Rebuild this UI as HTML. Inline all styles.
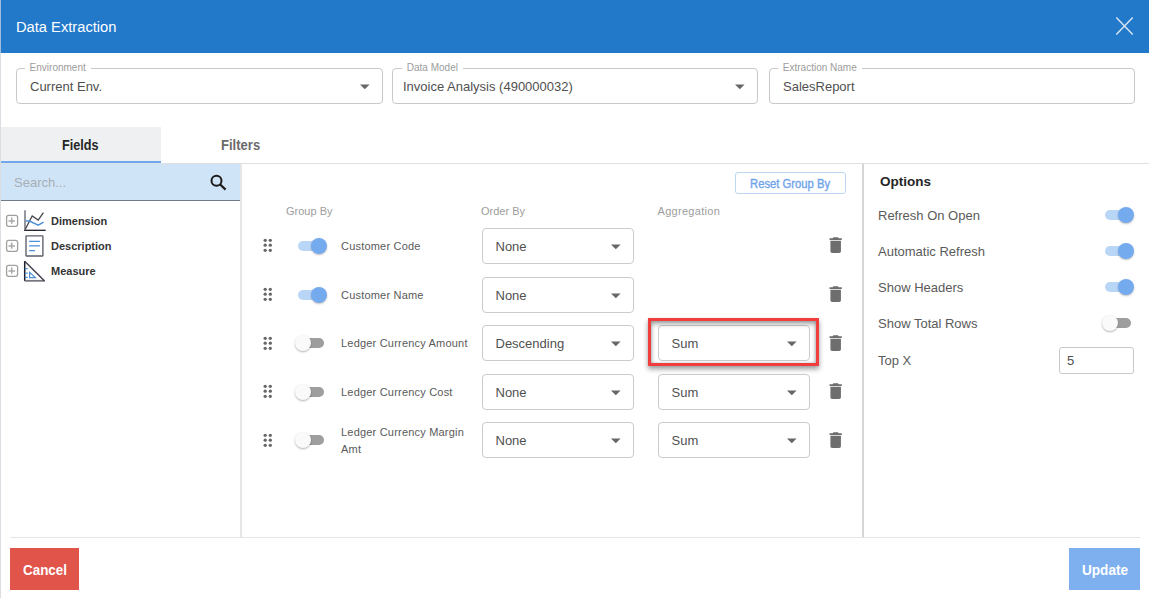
<!DOCTYPE html>
<html><head><meta charset="utf-8">
<style>
*{box-sizing:border-box;margin:0;padding:0}
html,body{width:1149px;height:598px;overflow:hidden;background:#fff;font-family:"Liberation Sans",sans-serif;}
.a{position:absolute}
.t{position:absolute;white-space:nowrap;line-height:1}
#lb{left:0;top:0;width:1px;height:598px;background:linear-gradient(#a2bedb 0,#a2bedb 53px,#dcdde2 53px)}
#hdr{left:1px;top:0;width:1148px;height:53px;background:#2278c9}
.fld{position:absolute;top:68px;height:36px;border:1px solid #c9c9c9;border-radius:4px;background:#fff}
.lg{position:absolute;top:-7px;background:#fff;padding:0 5px;font-size:10px;line-height:12px;color:#9c9c9c;white-space:nowrap}
.arr{position:absolute;right:12px;top:15px}
.sel{position:absolute;height:36px;border:1px solid #cbcbcb;border-radius:4px;background:#fff}
.sel .v{position:absolute;left:12.5px;top:11px;font-size:13px;line-height:1;color:#505050;white-space:nowrap}

.tg{position:absolute;width:32px;height:16px}
.tg .tr{position:absolute;left:3px;top:3px;width:26px;height:10px;border-radius:5px}
.tg .kn{position:absolute;top:0;width:16px;height:16px;border-radius:50%}
.tg.on .tr{background:#bad6f6}
.tg.on .kn{left:16px;background:#74aaee;box-shadow:0 1px 2px rgba(0,0,0,.25)}
.tg.off .tr{background:#9e9e9e}
.tg.off .kn{left:0;background:#fafafa;box-shadow:0 1px 2px rgba(0,0,0,.3)}
.lbl{position:absolute;left:341px;font-size:11px;line-height:16.6px;color:#5a5a5a;letter-spacing:.2px;white-space:nowrap}
.colh{position:absolute;top:204.7px;font-size:11px;line-height:12px;color:#9d9d9d;white-space:nowrap}
.opt{position:absolute;left:878px;font-size:13px;line-height:1;color:#5a5a5a;white-space:nowrap}
</style></head><body>
<div class="a" id="lb"></div>
<div class="a" id="hdr"></div>
<div class="t" style="left:16px;top:20px;font-size:14.7px;color:#fff">Data Extraction</div>
<svg class="a" style="left:1110px;top:11px" width="30" height="30" viewBox="0 0 30 30"><path d="M6.3 6.5L22.7 23.5M22.7 6.5L6.3 23.5" stroke="#d6e4f4" stroke-width="1.5" fill="none"/></svg>

<!-- top fields -->
<div class="fld" style="left:16px;width:367px"><div class="lg" style="left:7.6px">Environment</div><div class="t" style="left:13px;top:11px;font-size:13px;color:#505050">Current Env.</div><svg class="arr" width="11" height="7" viewBox="0 0 11 7"><polygon points="1,0.5 10.6,0.5 5.8,5.3" fill="#676767"/></svg></div>
<div class="fld" style="left:392px;width:366px"><div class="lg" style="left:8.8px">Data Model</div><div class="t" style="left:10px;top:11px;font-size:13px;color:#505050">Invoice Analysis (490000032)</div><svg class="arr" width="11" height="7" viewBox="0 0 11 7"><polygon points="1,0.5 10.6,0.5 5.8,5.3" fill="#676767"/></svg></div>
<div class="fld" style="left:769px;width:366px"><div class="lg" style="left:7.8px">Extraction Name</div><div class="t" style="left:13px;top:11px;font-size:13px;color:#505050">SalesReport</div></div>

<!-- tabs -->
<div class="a" style="left:1px;top:127px;width:160px;height:34px;background:#eff0f2"></div>
<div class="a" style="left:1px;top:161px;width:160px;height:2px;background:#6fa8f0"></div>
<div class="a" style="left:1px;top:163px;width:1148px;height:1px;background:#e0e0e0"></div>
<div class="t" style="left:62px;top:138px;font-size:14.8px;font-weight:bold;color:#262626;transform:scaleX(.855);transform-origin:0 0">Fields</div>
<div class="t" style="left:221px;top:138px;font-size:14.8px;font-weight:bold;color:#6a6a6a;transform:scaleX(.883);transform-origin:0 0">Filters</div>

<!-- left panel -->
<div class="a" style="left:1px;top:164px;width:240px;height:36px;background:#d0e4f7"></div>
<div class="a" style="left:1px;top:200px;width:240px;height:1px;background:#6f7d8b"></div>
<div class="t" style="left:14px;top:176px;font-size:13px;color:#a7aeb6">Search...</div>
<svg class="a" style="left:205px;top:170.5px" width="26" height="24" viewBox="0 0 26 24"><circle cx="11.5" cy="9.8" r="5" stroke="#1b1b1b" stroke-width="2" fill="none"/><path d="M15.2 13.5L20.6 18.6" stroke="#1b1b1b" stroke-width="2.2"/></svg>
<div class="a" style="left:240px;top:164px;width:2px;height:373px;background:#e6e6e6"></div>

<!-- tree -->
<svg class="a" style="left:0;top:205px" width="50" height="80" viewBox="0 205 50 80">
 <g stroke="#a0a0a0" fill="none" stroke-width="1.3">
  <rect x="6.6" y="215.3" width="11" height="11" rx="2"/>
  <rect x="6.6" y="240.3" width="11" height="11" rx="2"/>
  <rect x="6.6" y="265.3" width="11" height="11" rx="2"/>
 </g>
 <g stroke="#a8a8a8" stroke-width="1.5">
  <path d="M8.5 220.9H14.9M11.7 217.5V223.8"/>
  <path d="M8.5 245.9H14.9M11.7 242.5V248.8"/>
  <path d="M8.5 270.9H14.9M11.7 267.5V273.8"/>
 </g>
 <!-- dimension -->
 <path d="M25 210.3V230.4" stroke="#7d7f88" stroke-width="1.6"/>
 <path d="M24.2 230.3H45.7" stroke="#1d1d2b" stroke-width="1.3"/>
 <path d="M25.4 229L32.2 215.9L38.2 220.1L43.4 212.6" stroke="#45454d" stroke-width="1.3" fill="none"/>
 <path d="M25.8 221H29.4L38.2 225.2L43.6 222.2" stroke="#4a90d9" stroke-width="1.4" fill="none"/>
 <!-- description -->
 <rect x="26" y="235.9" width="16.9" height="20.1" stroke="#5a5e6a" stroke-width="1.35" fill="none" rx="0.6"/>
 <path d="M29.1 241.4H39.9M29.1 245.9H39.9M29.1 250.6H35" stroke="#4a8fd8" stroke-width="1.4"/>
 <!-- measure -->
 <path d="M24.7 261.2V281" stroke="#1d1d2b" stroke-width="1.5"/>
 <path d="M24.7 280.8H44.6" stroke="#75767f" stroke-width="1.8"/>
 <path d="M24.7 261.2L44.6 281" stroke="#3d3e48" stroke-width="1.4"/>
 <path d="M24.9 268.7H27.7M24.9 273.1H27.7M24.9 277.4H27.7" stroke="#4a8fd8" stroke-width="1.2"/>
 <path d="M29.6 272.4V277.6H35.4Z" stroke="#4a8fd8" stroke-width="1.2" fill="none"/>
</svg>
<div class="t" style="left:51px;top:216px;font-size:11px;font-weight:bold;color:#353535">Dimension</div>
<div class="t" style="left:51px;top:241px;font-size:11px;font-weight:bold;color:#353535">Description</div>
<div class="t" style="left:51px;top:266px;font-size:11px;font-weight:bold;color:#353535">Measure</div>

<!-- middle -->
<div class="a" style="left:735px;top:172px;width:111px;height:22px;border:1px solid #bcd6f4;border-radius:3px"></div>
<div class="t" style="left:749.8px;top:177.5px;font-size:12.3px;color:#6ea3ea;-webkit-text-stroke:.35px #6ea3ea;transform:scaleX(.915);transform-origin:0 0">Reset Group By</div>
<div class="colh" style="left:286px">Group By</div>
<div class="colh" style="left:481px">Order By</div>
<div class="colh" style="left:657.5px;letter-spacing:.3px">Aggregation</div>

<!--ROWS-->
<svg class="a" style="left:260px;top:236px" width="16" height="20" viewBox="0 0 16 20"><g fill="#676767"><circle cx="5.2" cy="4.3" r="1.65"/><circle cx="10.3" cy="4.3" r="1.65"/><circle cx="5.2" cy="9.2" r="1.65"/><circle cx="10.3" cy="9.2" r="1.65"/><circle cx="5.2" cy="14.3" r="1.65"/><circle cx="10.3" cy="14.3" r="1.65"/></g></svg>
<div class="tg on a" style="left:294.5px;top:238px"><div class="tr"></div><div class="kn"></div></div>
<div class="lbl" style="top:237.7px">Customer Code</div>
<div class="sel" style="left:482px;top:228px;width:152px"><div class="v">None</div><svg class="arr" width="11" height="7" viewBox="0 0 11 7"><polygon points="1,0.5 10.6,0.5 5.8,5.3" fill="#676767"/></svg></div>
<svg class="a" style="left:825px;top:235px" width="21" height="21" viewBox="0 0 24 24" ><g transform="translate(0.2,-0.4) scale(1)"><path fill="#6e6e6e" d="M6 19c0 1.1.9 2 2 2h8c1.1 0 2-.9 2-2V7H6v12zM19 4h-3.5l-1-1h-5l-1 1H5v2h14V4z"/></g></svg>
<svg class="a" style="left:260px;top:285px" width="16" height="20" viewBox="0 0 16 20"><g fill="#676767"><circle cx="5.2" cy="4.3" r="1.65"/><circle cx="10.3" cy="4.3" r="1.65"/><circle cx="5.2" cy="9.2" r="1.65"/><circle cx="10.3" cy="9.2" r="1.65"/><circle cx="5.2" cy="14.3" r="1.65"/><circle cx="10.3" cy="14.3" r="1.65"/></g></svg>
<div class="tg on a" style="left:294.5px;top:287px"><div class="tr"></div><div class="kn"></div></div>
<div class="lbl" style="top:286.7px">Customer Name</div>
<div class="sel" style="left:482px;top:277px;width:152px"><div class="v">None</div><svg class="arr" width="11" height="7" viewBox="0 0 11 7"><polygon points="1,0.5 10.6,0.5 5.8,5.3" fill="#676767"/></svg></div>
<svg class="a" style="left:825px;top:284px" width="21" height="21" viewBox="0 0 24 24" ><g transform="translate(0.2,-0.4) scale(1)"><path fill="#6e6e6e" d="M6 19c0 1.1.9 2 2 2h8c1.1 0 2-.9 2-2V7H6v12zM19 4h-3.5l-1-1h-5l-1 1H5v2h14V4z"/></g></svg>
<svg class="a" style="left:260px;top:333.7px" width="16" height="20" viewBox="0 0 16 20"><g fill="#676767"><circle cx="5.2" cy="4.3" r="1.65"/><circle cx="10.3" cy="4.3" r="1.65"/><circle cx="5.2" cy="9.2" r="1.65"/><circle cx="10.3" cy="9.2" r="1.65"/><circle cx="5.2" cy="14.3" r="1.65"/><circle cx="10.3" cy="14.3" r="1.65"/></g></svg>
<div class="tg off a" style="left:294.5px;top:335px"><div class="tr"></div><div class="kn"></div></div>
<div class="lbl" style="top:334.7px">Ledger Currency Amount</div>
<div class="sel" style="left:482px;top:325px;width:152px"><div class="v">Descending</div><svg class="arr" width="11" height="7" viewBox="0 0 11 7"><polygon points="1,0.5 10.6,0.5 5.8,5.3" fill="#676767"/></svg></div>
<div class="sel" style="left:658px;top:325px;width:152px"><div class="v">Sum</div><svg class="arr" width="11" height="7" viewBox="0 0 11 7"><polygon points="1,0.5 10.6,0.5 5.8,5.3" fill="#676767"/></svg></div>
<svg class="a" style="left:825px;top:332.7px" width="21" height="21" viewBox="0 0 24 24" ><g transform="translate(0.2,-0.4) scale(1)"><path fill="#6e6e6e" d="M6 19c0 1.1.9 2 2 2h8c1.1 0 2-.9 2-2V7H6v12zM19 4h-3.5l-1-1h-5l-1 1H5v2h14V4z"/></g></svg>
<svg class="a" style="left:260px;top:382px" width="16" height="20" viewBox="0 0 16 20"><g fill="#676767"><circle cx="5.2" cy="4.3" r="1.65"/><circle cx="10.3" cy="4.3" r="1.65"/><circle cx="5.2" cy="9.2" r="1.65"/><circle cx="10.3" cy="9.2" r="1.65"/><circle cx="5.2" cy="14.3" r="1.65"/><circle cx="10.3" cy="14.3" r="1.65"/></g></svg>
<div class="tg off a" style="left:294.5px;top:384px"><div class="tr"></div><div class="kn"></div></div>
<div class="lbl" style="top:383.7px">Ledger Currency Cost</div>
<div class="sel" style="left:482px;top:374px;width:152px"><div class="v">None</div><svg class="arr" width="11" height="7" viewBox="0 0 11 7"><polygon points="1,0.5 10.6,0.5 5.8,5.3" fill="#676767"/></svg></div>
<div class="sel" style="left:658px;top:374px;width:152px"><div class="v">Sum</div><svg class="arr" width="11" height="7" viewBox="0 0 11 7"><polygon points="1,0.5 10.6,0.5 5.8,5.3" fill="#676767"/></svg></div>
<svg class="a" style="left:825px;top:381px" width="21" height="21" viewBox="0 0 24 24" ><g transform="translate(0.2,-0.4) scale(1)"><path fill="#6e6e6e" d="M6 19c0 1.1.9 2 2 2h8c1.1 0 2-.9 2-2V7H6v12zM19 4h-3.5l-1-1h-5l-1 1H5v2h14V4z"/></g></svg>
<svg class="a" style="left:260px;top:431px" width="16" height="20" viewBox="0 0 16 20"><g fill="#676767"><circle cx="5.2" cy="4.3" r="1.65"/><circle cx="10.3" cy="4.3" r="1.65"/><circle cx="5.2" cy="9.2" r="1.65"/><circle cx="10.3" cy="9.2" r="1.65"/><circle cx="5.2" cy="14.3" r="1.65"/><circle cx="10.3" cy="14.3" r="1.65"/></g></svg>
<div class="tg off a" style="left:294.5px;top:432px"><div class="tr"></div><div class="kn"></div></div>
<div class="lbl" style="top:424px">Ledger Currency Margin<br>Amt</div>
<div class="sel" style="left:482px;top:422px;width:152px"><div class="v">None</div><svg class="arr" width="11" height="7" viewBox="0 0 11 7"><polygon points="1,0.5 10.6,0.5 5.8,5.3" fill="#676767"/></svg></div>
<div class="sel" style="left:658px;top:422px;width:152px"><div class="v">Sum</div><svg class="arr" width="11" height="7" viewBox="0 0 11 7"><polygon points="1,0.5 10.6,0.5 5.8,5.3" fill="#676767"/></svg></div>
<svg class="a" style="left:825px;top:430px" width="21" height="21" viewBox="0 0 24 24" ><g transform="translate(0.2,-0.4) scale(1)"><path fill="#6e6e6e" d="M6 19c0 1.1.9 2 2 2h8c1.1 0 2-.9 2-2V7H6v12zM19 4h-3.5l-1-1h-5l-1 1H5v2h14V4z"/></g></svg>
<div class="a" style="left:648px;top:318px;width:171px;height:48px;border:3px solid #f03d3e;box-shadow:0 3px 5px rgba(0,0,0,.4), inset 0 3px 5px rgba(0,0,0,.35), inset 0 0 3px rgba(0,0,0,.2)"></div>
<!--/ROWS-->

<div class="a" style="left:862px;top:164px;width:2px;height:373px;background:#d6d6d6"></div>

<!-- right -->
<div class="t" style="left:880px;top:175px;font-size:13.5px;font-weight:bold;color:#262626">Options</div>
<div class="opt" style="top:209px">Refresh On Open</div>
<div class="opt" style="top:245px">Automatic Refresh</div>
<div class="opt" style="top:281px">Show Headers</div>
<div class="opt" style="top:317px">Show Total Rows</div>
<div class="opt" style="top:354px">Top X</div>
<div class="tg on a" style="left:1101.5px;top:206.5px"><div class="tr"></div><div class="kn"></div></div>
<div class="tg on a" style="left:1101.5px;top:242.5px"><div class="tr"></div><div class="kn"></div></div>
<div class="tg on a" style="left:1101.5px;top:278.5px"><div class="tr"></div><div class="kn"></div></div>
<div class="tg off a" style="left:1101.5px;top:314.5px"><div class="tr"></div><div class="kn"></div></div>
<div class="a" style="left:1059px;top:347px;width:75px;height:27px;border:1px solid #c9c9c9;border-radius:3px"></div>
<div class="t" style="left:1067px;top:354px;font-size:13px;color:#505050">5</div>

<!-- footer -->
<div class="a" style="left:10px;top:537px;width:1130px;height:1px;background:#e5e5e5"></div>
<div class="a" style="left:10px;top:548px;width:69px;height:42px;background:#e0544a"></div>
<div class="t" style="left:22.5px;top:563px;font-size:14.8px;font-weight:bold;color:#fff;transform:scaleX(.907);transform-origin:0 0">Cancel</div>
<div class="a" style="left:1069px;top:548px;width:71px;height:42px;background:#7eb0f0"></div>
<div class="t" style="left:1082px;top:563px;font-size:14.8px;font-weight:bold;color:#fff;transform:scaleX(.918);transform-origin:0 0">Update</div>
</body></html>
